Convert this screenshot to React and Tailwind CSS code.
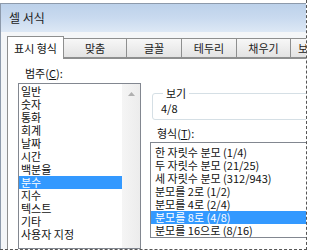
import { useState } from 'react'

const categories = ['일반', '숫자', '통화', '회계', '날짜', '시간', '백분율', '분수', '지수', '텍스트', '기타', '사용자 지정']

const formats = [
  '한 자릿수 분모 (1/4)',
  '두 자릿수 분모 (21/25)',
  '세 자릿수 분모 (312/943)',
  '분모를 2로 (1/2)',
  '분모를 4로 (2/4)',
  '분모를 8로 (4/8)',
  '분모를 16으로 (8/16)'
]

const tabs = [
  { label: '맞춤', w: 'w-[63px] justify-center' },
  { label: '글꼴', w: 'w-[55px] justify-center' },
  { label: '테두리', w: 'w-[55px] justify-center' },
  { label: '채우기', w: 'w-[54px] justify-center' },
  { label: '보', w: 'w-[40px] justify-start pl-[7px]' }
]

export default function App() {
  const [category, setCategory] = useState('분수')
  const [format, setFormat] = useState('분모를 8로 (4/8)')

  return (
    <div className="w-[309px] h-[252px] bg-white overflow-hidden text-[11px] text-[#111] font-['Noto_Sans_CJK_KR','Noto_Sans',sans-serif]">
      {/* cropped dialog, dashed edges right and bottom */}
      <div className="w-[307px] h-[250px] border-r border-b border-dashed border-[#555] overflow-hidden pt-[3px]">
        <div className="h-full border-l border-t border-[#8d9aab] flex flex-col">
          {/* title bar */}
          <div className="h-[28px] shrink-0 flex items-center pl-[8px] bg-gradient-to-b from-[#bcd1ea] via-[#c9daef] to-[#dde8f5] text-[12px] text-[#1c1c1c]">
            셀 서식
          </div>

          {/* client area */}
          <div className="flex-1 flex flex-col bg-[#f4f6f8] pl-[6px]">
            {/* tabs */}
            <div className="flex items-end h-[26px] pt-[3px] relative z-10">
              <div className="w-[57px] h-[23px] shrink-0 whitespace-nowrap bg-white border border-b-0 border-[#8e8f8f] flex items-center justify-center -mb-px">
                표시 형식
              </div>
              {tabs.map((t) => (
                <div
                  key={t.label}
                  className={`${t.w} h-[20px] shrink-0 whitespace-nowrap border border-l-0 border-[#8e8f8f] bg-gradient-to-b from-[#f7f7f7] to-[#e3e3e3] flex items-center text-[#222]`}
                >
                  {t.label}
                </div>
              ))}
            </div>

            {/* tab panel */}
            <div className="flex-1 bg-white border-l border-t border-[#8e8f8f] flex pl-[10px] gap-[9px]">
              {/* category column */}
              <div className="w-[123px] shrink-0 flex flex-col pt-[8px]">
                <div className="pl-[7px] leading-[13px] mb-[3px]">
                  범주(<span className="underline">C</span>):
                </div>
                <div className="flex-1 border border-[#828790] flex">
                  <div className="flex-1 pt-[1px]">
                    {categories.map((c) => (
                      <div
                        key={c}
                        onClick={() => setCategory(c)}
                        className={`h-[13px] leading-[13px] pl-[2px] whitespace-nowrap ${
                          c === category ? 'bg-[#3399ff] text-white' : ''
                        }`}
                      >
                        {c}
                      </div>
                    ))}
                  </div>
                  <div className="w-[18px] bg-gradient-to-r from-[#f5f5f5] to-[#ececec] flex justify-center pt-[8px]">
                    <svg width="7" height="4" viewBox="0 0 7 4">
                      <path d="M0 4 L3.5 0 L7 4 Z" fill="#b0b0b0" />
                    </svg>
                  </div>
                </div>
              </div>

              {/* right column */}
              <div className="w-[170px] shrink-0 flex flex-col pt-[28px]">
                <fieldset className="ml-[2px] border border-[#d5dfe5] rounded-[3px] h-[33px] px-[8px]">
                  <legend className="px-[3px] ml-[2px] leading-[13px]">보기</legend>
                  <div className="leading-[13px] pt-[2px]">4/8</div>
                </fieldset>
                <div className="pl-[7px] leading-[13px] mt-[7px] mb-[2px]">
                  형식(<span className="underline">T</span>):
                </div>
                <div className="h-[96px] border border-[#828790] pt-[3px]">
                  {formats.map((f) => (
                    <div
                      key={f}
                      onClick={() => setFormat(f)}
                      className={`h-[13px] leading-[13px] pl-[4px] whitespace-nowrap ${
                        f === format ? 'bg-[#3399ff] text-white' : ''
                      }`}
                    >
                      {f}
                    </div>
                  ))}
                </div>
              </div>
            </div>
          </div>
        </div>
      </div>
    </div>
  )
}
